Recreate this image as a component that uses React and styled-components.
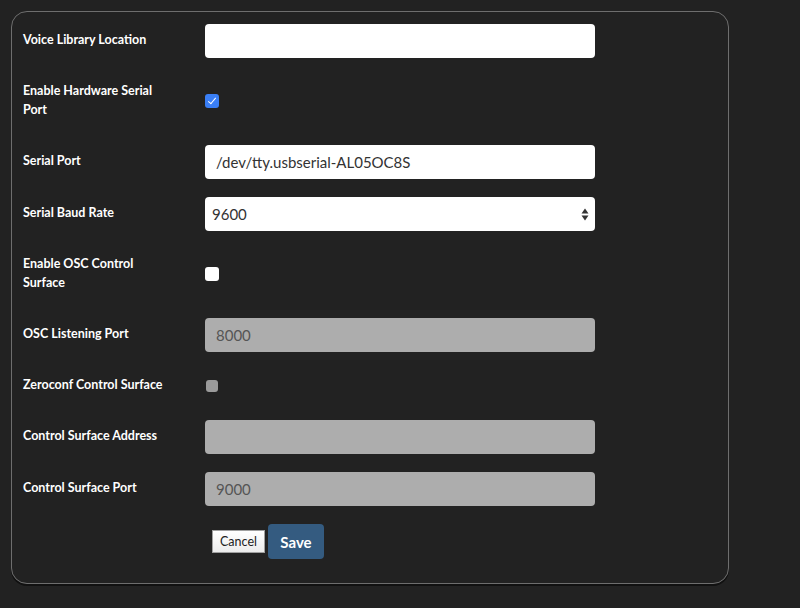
import React, { useState } from "react";
import styled, { createGlobalStyle } from "styled-components";

const GlobalStyle = createGlobalStyle`
  html, body {
    margin: 0;
    padding: 0;
    background: #222222;
    font-family: Lato, "Open Sans", sans-serif;
  }
`;

const Page = styled.div`
  width: 800px;
  height: 608px;
  padding: 11px;
  box-sizing: border-box;
  background: #222222;
`;

const Panel = styled.form`
  width: 718px;
  height: 573px;
  box-sizing: border-box;
  border: 1.5px solid #6e6e6e;
  border-radius: 16px;
  box-shadow: 0 2px 0 #111;
  padding: 11.5px 11px;
  display: flex;
  flex-direction: column;
  gap: 18px;
`;

const Row = styled.div`
  display: grid;
  grid-template-columns: 182px 390px;
  align-items: center;
`;

const Label = styled.label`
  color: #ffffff;
  font-size: 12.5px;
  font-weight: 700;
  line-height: 19px;
  padding: 5px 0 8px;
  max-width: ${(p) => (p.$narrow ? "140px" : "170px")};
`;

const TextInput = styled.input`
  width: 390px;
  height: 34px;
  box-sizing: border-box;
  border: none;
  border-radius: 4px;
  padding: 0 11px;
  font-family: Lato, sans-serif;
  font-size: 15px;
  color: #333;
  background: #ffffff;
  outline: none;
  &:disabled {
    background: #adadad;
    color: #555;
  }
`;

const SelectWrap = styled.div`
  position: relative;
  width: 390px;
  height: 34px;
`;

const Select = styled.select`
  appearance: none;
  -webkit-appearance: none;
  width: 100%;
  height: 100%;
  border: none;
  border-radius: 4px;
  padding: 0 7px;
  font-family: Lato, sans-serif;
  font-size: 15px;
  color: #333;
  background: #ffffff;
  outline: none;
`;

const Arrows = styled.svg`
  position: absolute;
  right: 6px;
  top: 11px;
  pointer-events: none;
`;

const Check = styled.input`
  appearance: none;
  -webkit-appearance: none;
  margin: 1px 0 0 ${(p) => (p.disabled ? "0.5px" : "0")};
  width: ${(p) => (p.disabled ? "12px" : "13.5px")};
  height: ${(p) => (p.disabled ? "12px" : "13.5px")};
  border-radius: 3px;
  background: ${(p) => (p.disabled ? "#9b9b9b" : "#ffffff")};
  position: relative;
  &:checked {
    background: #3a7ff6;
  }
  &:checked::after {
    content: "";
    position: absolute;
    left: 4.5px;
    top: 1.5px;
    width: 3px;
    height: 7px;
    border: solid #fff;
    border-width: 0 1.6px 1.6px 0;
    transform: rotate(40deg);
  }
`;

const Actions = styled.div`
  display: flex;
  align-items: center;
  gap: 3px;
  padding-left: 189px;
`;

const CancelButton = styled.button`
  height: 23px;
  width: 53px;
  padding: 0;
  box-sizing: border-box;
  border: 1px solid #a0a0a0;
  border-radius: 0;
  background: linear-gradient(#ffffff, #ececec);
  font-family: Lato, sans-serif;
  font-size: 12.5px;
  color: #222;
`;

const SaveButton = styled.button`
  height: 35px;
  width: 56px;
  border: none;
  border-radius: 4px;
  background: #345b80;
  color: #ffffff;
  font-family: Lato, sans-serif;
  font-size: 15px;
  font-weight: 700;
  padding: 2px 0 0;
`;

export default function App() {
  const [voicePath, setVoicePath] = useState("");
  const [serialOn, setSerialOn] = useState(true);
  const [serialPort, setSerialPort] = useState("/dev/tty.usbserial-AL05OC8S");
  const [baud, setBaud] = useState("9600");
  const [oscOn, setOscOn] = useState(false);

  return (
    <Page>
      <GlobalStyle />
      <Panel onSubmit={(e) => e.preventDefault()}>
        <Row>
          <Label>Voice Library Location</Label>
          <TextInput value={voicePath} onChange={(e) => setVoicePath(e.target.value)} />
        </Row>
        <Row>
          <Label $narrow>Enable Hardware Serial Port</Label>
          <div>
            <Check type="checkbox" checked={serialOn} onChange={(e) => setSerialOn(e.target.checked)} />
          </div>
        </Row>
        <Row>
          <Label>Serial Port</Label>
          <TextInput value={serialPort} onChange={(e) => setSerialPort(e.target.value)} />
        </Row>
        <Row>
          <Label>Serial Baud Rate</Label>
          <SelectWrap>
            <Select value={baud} onChange={(e) => setBaud(e.target.value)}>
              {["1200", "2400", "4800", "9600", "19200", "38400", "57600", "115200"].map((b) => (
                <option key={b} value={b}>
                  {b}
                </option>
              ))}
            </Select>
            <Arrows width="8" height="13" viewBox="0 0 8 13">
              <path d="M4 0.5 L7.5 5.5 H0.5 Z" fill="#333" />
              <path d="M4 12.5 L7.5 7.5 H0.5 Z" fill="#333" />
            </Arrows>
          </SelectWrap>
        </Row>
        <Row>
          <Label $narrow>Enable OSC Control Surface</Label>
          <div>
            <Check type="checkbox" checked={oscOn} onChange={(e) => setOscOn(e.target.checked)} />
          </div>
        </Row>
        <Row>
          <Label>OSC Listening Port</Label>
          <TextInput value="8000" disabled readOnly />
        </Row>
        <Row>
          <Label>Zeroconf Control Surface</Label>
          <div>
            <Check type="checkbox" disabled />
          </div>
        </Row>
        <Row>
          <Label>Control Surface Address</Label>
          <TextInput value="" disabled readOnly />
        </Row>
        <Row>
          <Label>Control Surface Port</Label>
          <TextInput value="9000" disabled readOnly />
        </Row>
        <Actions>
          <CancelButton type="button">Cancel</CancelButton>
          <SaveButton type="submit">Save</SaveButton>
        </Actions>
      </Panel>
    </Page>
  );
}
